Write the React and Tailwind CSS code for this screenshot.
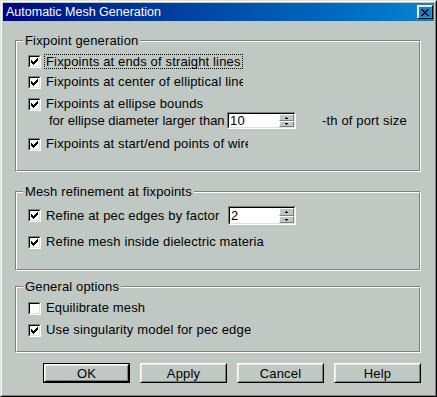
import React from 'react';

// classic 3D frame helpers
function Raised({ className = '', children }) {
  return (
    <div className={`border border-t-white border-l-white border-r-black border-b-black ${className}`}>
      <div className="w-full h-full border border-t-[#e4e9e6] border-l-[#e4e9e6] border-r-[#808080] border-b-[#808080] flex items-center justify-center">
        {children}
      </div>
    </div>
  );
}

function Sunken({ className = '', children }) {
  return (
    <div className={`border border-t-[#808080] border-l-[#808080] border-r-white border-b-white ${className}`}>
      <div className="w-full h-full border border-t-black border-l-black border-r-[#dfe3e0] border-b-[#dfe3e0] bg-white flex">
        {children}
      </div>
    </div>
  );
}

function CheckBox({ checked }) {
  return (
    <Sunken className="w-[13px] h-[13px] shrink-0">
      {checked && (
        <svg width="7" height="7" viewBox="0 0 7 7" className="m-px" shapeRendering="crispEdges">
          <path
            fill="#000"
            d="M6 0h1v1h-1z M5 1h2v1h-2z M0 2h1v1h-1z M4 2h3v1h-3z M0 3h2v1h-2z M3 3h3v1h-3z M0 4h5v1h-5z M1 5h3v1h-3z M2 6h1v1h-1z"
          />
        </svg>
      )}
    </Sunken>
  );
}

function SpinBox({ value, w, h, top, bottom }) {
  return (
    <Sunken className={`${w} ${h} shrink-0`}>
      <span className="flex-1 pl-[1px] leading-none self-center">{value}</span>
      <div className="w-[15px] flex flex-col">
        <div className={`${top} border border-t-white border-l-white border-r-[#808080] border-b-[#808080] bg-[#c0c8c3] flex items-center justify-center`}>
          <svg width="3" height="2" viewBox="0 0 3 2" shapeRendering="crispEdges">
            <path fill="#000" d="M1 0h1v1h-1z M0 1h3v1h-3z" />
          </svg>
        </div>
        <div className={`${bottom} border border-t-white border-l-white border-r-[#808080] border-b-[#808080] bg-[#c0c8c3] flex items-center justify-center`}>
          <svg width="3" height="2" viewBox="0 0 3 2" shapeRendering="crispEdges">
            <path fill="#000" d="M0 0h3v1h-3z M1 1h1v1h-1z" />
          </svg>
        </div>
      </div>
    </Sunken>
  );
}

function GroupBox({ title, className = '', children }) {
  return (
    <div className={`relative w-[406px] border border-t-[#808080] border-l-[#808080] border-r-white border-b-white ${className}`}>
      <div className="h-full border border-t-white border-l-white border-r-[#808080] border-b-[#808080] pl-[11px] flex flex-col">
        {children}
      </div>
      <span className="absolute left-[7px] -top-[8px] px-[2px] bg-[#c0c8c3] leading-[15px]">{title}</span>
    </div>
  );
}

function CheckRow({ checked, label, className = '', clip = '', focused = false }) {
  return (
    <div className={`h-[16px] flex items-center ${className}`}>
      <CheckBox checked={checked} />
      {focused ? (
        <span className="ml-[3px] px-[1px] border border-dotted border-black leading-[13px] whitespace-nowrap">{label}</span>
      ) : (
        <span className={`ml-[5px] leading-[16px] whitespace-nowrap overflow-hidden ${clip}`}>{label}</span>
      )}
    </div>
  );
}

function Button({ label, primary }) {
  if (primary) {
    return (
      <div className="w-[87px] h-[20px] border border-black">
        <Raised className="w-full h-full">
          <span className="leading-none">{label}</span>
        </Raised>
      </div>
    );
  }
  return (
    <Raised className="w-[87px] h-[20px]">
      <span className="leading-none">{label}</span>
    </Raised>
  );
}

export default function App() {
  return (
    <div className="w-[437px] h-[397px] bg-[#c0c8c3] border border-t-[#dfe3e0] border-l-[#dfe3e0] border-r-black border-b-black font-['Liberation_Sans',Arial,sans-serif] text-[13px] tracking-[0.15px] text-black">
      <div className="h-full border border-t-white border-l-white border-r-[#808080] border-b-[#808080] p-px flex flex-col">
        {/* title bar */}
        <div className="h-[18px] shrink-0 flex items-center justify-between bg-gradient-to-r from-[#000080] to-[#1084d0] pl-[3px] pr-[1px]">
          <span className="text-white text-[12.5px] tracking-normal leading-none">Automatic Mesh Generation</span>
          <Raised className="w-[16px] h-[14px]">
            <svg width="8" height="7" viewBox="0 0 8 7" shapeRendering="crispEdges">
              <path
                fill="#000"
                d="M0 0h2v1h-2z M6 0h2v1h-2z M1 1h2v1h-2z M5 1h2v1h-2z M2 2h4v1h-4z M3 3h2v1h-2z M2 4h4v1h-4z M1 5h2v1h-2z M5 5h2v1h-2z M0 6h2v1h-2z M6 6h2v1h-2z"
              />
            </svg>
          </Raised>
        </div>

        <div className="pl-[12px] flex flex-col">
          <GroupBox title="Fixpoint generation" className="mt-[19px] h-[132px]">
            <CheckRow checked focused label="Fixpoints at ends of straight lines" className="mt-[11px]" />
            <CheckRow checked label="Fixpoints at center of elliptical lines" clip="w-[197px]" className="mt-[5px]" />
            <CheckRow checked label="Fixpoints at ellipse bounds" className="mt-[6px]" />
            <div className="h-[17px] flex items-center">
              <span className="ml-[21px] w-[178px] whitespace-nowrap leading-none tracking-normal">for ellipse diameter larger than</span>
              <SpinBox value="10" w="w-[69px]" h="h-[17px]" top="h-[7px]" bottom="h-[6px]" />
              <span className="ml-[26px] leading-none whitespace-nowrap">-th of port size</span>
            </div>
            <CheckRow checked label="Fixpoints at start/end points of wires" clip="w-[202px]" className="mt-[7px]" />
          </GroupBox>

          <GroupBox title="Mesh refinement at fixpoints" className="mt-[19px] h-[80px]">
            <div className="mt-[13px] h-[19px] flex items-center">
              <CheckBox checked />
              <span className="ml-[5px] w-[182px] leading-none whitespace-nowrap">Refine at pec edges by factor</span>
              <SpinBox value="2" w="w-[68px]" h="h-[19px]" top="h-[8px]" bottom="h-[7px]" />
            </div>
            <CheckRow checked label="Refine mesh inside dielectric materia" className="mt-[9px]" />
          </GroupBox>

          <GroupBox title="General options" className="mt-[15px] h-[67px]">
            <CheckRow label="Equilibrate mesh" className="mt-[12px]" />
            <CheckRow checked label="Use singularity model for pec edge" className="mt-[6px]" />
          </GroupBox>

          <div className="mt-[10px] ml-[28px] flex gap-[10px]">
            <Button label="OK" primary />
            <Button label="Apply" />
            <Button label="Cancel" />
            <Button label="Help" />
          </div>
        </div>
      </div>
    </div>
  );
}
